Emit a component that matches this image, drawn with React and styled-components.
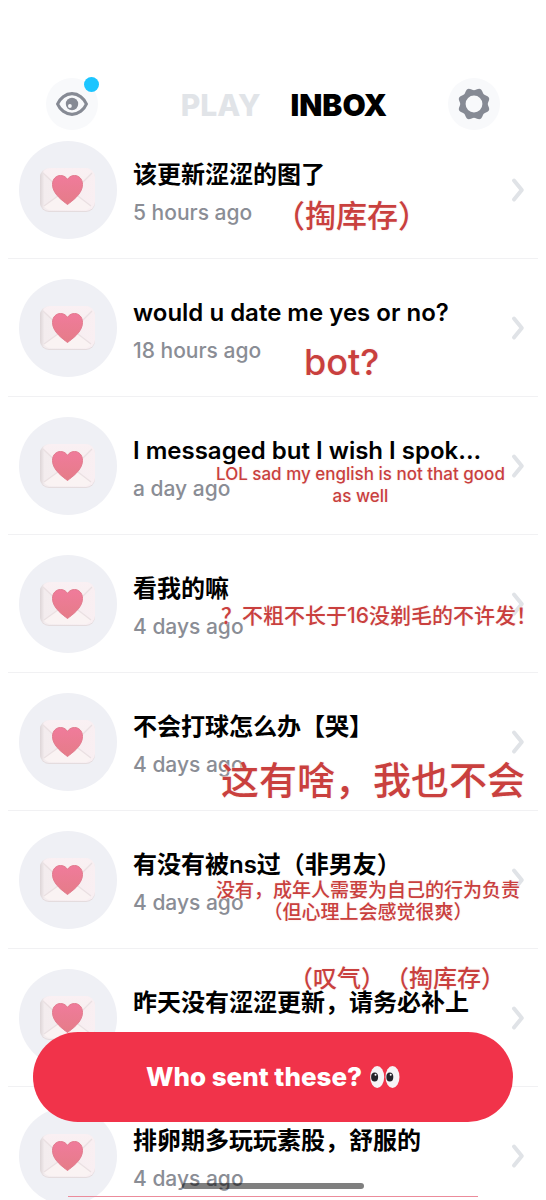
import React from 'react';
import styled, { createGlobalStyle } from 'styled-components';

const GlobalStyle = createGlobalStyle`
  * { box-sizing: border-box; }
  html, body { margin: 0; background: #fff; }
  body {
    font-family: Inter, "Noto Sans CJK SC", sans-serif;
    color: #000;
  }
`;

const Screen = styled.main`
  position: relative;
  height: 100vh;
  overflow: hidden;
  background: #fff;
`;

const Header = styled.header`
  display: flex;
  align-items: center;
  justify-content: space-between;
  padding: 78px 46px 11px;
`;

const IconButton = styled.button`
  position: relative;
  display: grid;
  place-items: center;
  width: 52px;
  height: 52px;
  padding: 0;
  border: 0;
  border-radius: 50%;
  background: #f8f9fb;
  color: #868a94;
`;

const Dot = styled.span`
  position: absolute;
  top: -1px;
  right: -1px;
  width: 15px;
  height: 15px;
  border-radius: 50%;
  background: #1cc5ff;
`;

const Tabs = styled.nav`
  display: flex;
  gap: 30px;
  padding: 2px 0 0 22px;
`;

const Tab = styled.a`
  font-size: 30px;
  line-height: 32px;
  font-weight: ${(p) => (p.$active ? 900 : 800)};
  text-decoration: none;
  color: ${(p) => (p.$active ? '#000' : '#e1e4e8')};
`;

const List = styled.ul`
  display: flex;
  flex-direction: column;
  gap: 20px;
  margin: 0;
  padding: 0 8px;
  list-style: none;
`;

const Row = styled.li`
  position: relative;
  padding: 0 13px 19px 11px;
  border-bottom: 1px solid #f1f1f3;
`;

const RowLink = styled.a`
  display: flex;
  align-items: center;
  gap: 16px;
  color: inherit;
  text-decoration: none;
`;

const Avatar = styled.span`
  display: grid;
  place-items: center;
  flex: none;
  width: 98px;
  height: 98px;
  border-radius: 50%;
  background: #eff0f5;
`;

const Texts = styled.span`
  display: flex;
  flex-direction: column;
  gap: 8px;
  flex: 1;
  min-width: 0;
  padding-top: 5px;
`;

const Title = styled.span`
  max-width: 350px;
  overflow: hidden;
  white-space: nowrap;
  font-size: 24px;
  line-height: 32px;
  font-weight: 600;
`;

const Time = styled.span`
  font-size: 21px;
  line-height: 28px;
  font-weight: 500;
  color: #8a8d95;
`;

const Note = styled.p`
  position: absolute;
  z-index: 1;
  top: ${(p) => p.$top}px;
  left: ${(p) => p.$left}px;
  margin: 0;
  white-space: pre;
  text-align: center;
  text-spacing-trim: space-all;
  font-size: ${(p) => p.$size}px;
  line-height: ${(p) => p.$line}px;
  font-weight: 500;
  color: #c9403e;
  text-shadow: 0 0 2px #fff, 0 0 2px #f3dcd8;
  pointer-events: none;
`;

const Cta = styled.button`
  position: absolute;
  z-index: 2;
  left: 33px;
  right: 33px;
  bottom: 78px;
  display: flex;
  align-items: center;
  justify-content: center;
  gap: 8px;
  height: 90px;
  border: 0;
  border-radius: 45px;
  background: #f1334a;
  color: #fff;
  font-family: inherit;
  font-size: 26px;
  line-height: 32px;
  font-weight: 800;
`;

const HomeBar = styled.div`
  position: absolute;
  z-index: 3;
  bottom: 11px;
  left: 50%;
  width: 182px;
  height: 6px;
  margin-left: -91px;
  border-radius: 3px;
  background: rgba(0, 0, 0, 0.5);
`;

const NextEdge = styled.div`
  position: absolute;
  z-index: 3;
  bottom: 3px;
  left: 68px;
  right: 68px;
  height: 1px;
  background: #ec8b9b;
`;

const EyeIcon = () => (
  <svg width="34" height="26" viewBox="0 0 34 26" fill="none" aria-hidden="true">
    <path d="M2.6 13C5 7.2 10.5 2.7 17 2.7S29 7.2 31.4 13C29 18.8 23.5 23.3 17 23.3S5 18.8 2.6 13Z" stroke="currentColor" strokeWidth="3.2" strokeLinejoin="round" />
    <circle cx="17" cy="13" r="6.2" fill="currentColor" />
    <circle cx="14.9" cy="15" r="1.9" fill="#f8f9fb" />
  </svg>
);

const gearPath = (() => {
  const points = [];
  for (let i = 0; i < 96; i += 1) {
    const a = (i / 96) * Math.PI * 2;
    const r = 15 + 1.2 * Math.cos(8 * (a - Math.PI / 8));
    points.push(`${(17 + r * Math.cos(a)).toFixed(2)} ${(17 + r * Math.sin(a)).toFixed(2)}`);
  }
  return `M${points.join('L')}ZM17 8.6a8.4 8.4 0 1 0 0 16.8a8.4 8.4 0 1 0 0-16.8Z`;
})();

const GearIcon = () => (
  <svg width="34" height="34" viewBox="0 0 34 34" aria-hidden="true">
    <path d={gearPath} fill="currentColor" fillRule="evenodd" />
  </svg>
);

const Chevron = () => (
  <svg width="14" height="26" viewBox="0 0 14 26" fill="none" aria-hidden="true">
    <path d="M3 3.5L10.8 13L3 22.5" stroke="#e0e3e7" strokeWidth="4" strokeLinecap="round" strokeLinejoin="round" />
  </svg>
);

const LoveLetter = () => (
  <svg width="58" height="46" viewBox="0 0 58 46" aria-hidden="true">
    <defs>
      <linearGradient id="paper" x1="0" y1="0" x2="1" y2="0">
        <stop offset="0" stopColor="#ddd5d7" />
        <stop offset="0.08" stopColor="#f3ecee" />
        <stop offset="1" stopColor="#f9eff2" />
      </linearGradient>
      <linearGradient id="fold" x1="0" y1="0" x2="0" y2="1">
        <stop offset="0" stopColor="#faf0f3" />
        <stop offset="1" stopColor="#f6efef" />
      </linearGradient>
      <linearGradient id="heart" x1="0" y1="0" x2="0" y2="1">
        <stop offset="0" stopColor="#f07b9b" />
        <stop offset="1" stopColor="#e57c88" />
      </linearGradient>
    </defs>
    <rect x="1" y="2" width="55" height="43" rx="9" fill="#e4dcde" />
    <rect x="1" y="1" width="55" height="43" rx="9" fill="url(#paper)" />
    <path d="M5 39L23 25Q29 21 35 25L52 39Q50 43 45 43H12Q7 43 5 39Z" fill="#faf3f3" />
    <path d="M4 5Q7 1 12 1H46Q51 1 53 5L34 24Q29 28 24 24Z" fill="url(#fold)" />
    <path d="M4 6L24 25M34 25L53 6M5 39L23 26M35 26L52 39" stroke="#eae0e2" strokeWidth="1.2" fill="none" />
    <path d="M28.5 37.5C24 34 13.5 27 13.5 17.5C13.5 11.5 17.5 8.5 21.5 8.5C25 8.5 27.5 10.5 28.5 12.5C29.5 10.5 32 8.5 35.5 8.5C39.5 8.5 43.5 11.5 43.5 17.5C43.5 27 33 34 28.5 37.5Z" fill="url(#heart)" stroke="#e27a8d" strokeWidth="1" strokeLinejoin="round" />
  </svg>
);

const EyesIcon = () => (
  <svg width="30" height="24" viewBox="0 0 30 24" role="img" aria-label="eyes">
    <ellipse cx="7.2" cy="12" rx="7" ry="11" fill="#f6f4f6" />
    <ellipse cx="22.5" cy="12" rx="7" ry="11" fill="#f6f4f6" />
    <ellipse cx="4.6" cy="12" rx="3.5" ry="4.6" fill="#24242a" />
    <ellipse cx="19.8" cy="12" rx="3.5" ry="4.6" fill="#24242a" />
    <circle cx="5.5" cy="9.8" r="1" fill="#fff" />
    <circle cx="20.7" cy="9.8" r="1" fill="#fff" />
  </svg>
);

const messages = [
  { title: '该更新涩涩的图了', time: '5 hours ago', note: { text: '（掏库存）', top: 55, left: 266, size: 31, line: 40 } },
  { title: 'would u date me yes or no?', time: '18 hours ago', note: { text: 'bot?', top: 63, left: 296, size: 36, line: 40 } },
  { title: 'I messaged but I wish I spok...', time: 'a day ago', note: { text: 'LOL sad my english is not that good\nas well', top: 46, left: 208, size: 17, line: 22 } },
  { title: '看我的嘛', time: '4 days ago', note: { text: '？不粗不长于16没剃毛的不许发！', top: 49, left: 213, size: 21, line: 24 } },
  { title: '不会打球怎么办【哭】', time: '4 days ago', note: { text: '这有啥，我也不会', top: 67, left: 213, size: 38, line: 40 } },
  { title: '有没有被ns过（非男友）', time: '4 days ago', note: { text: '没有，成年人需要为自己的行为负责\n（但心理上会感觉很爽）', top: 49, left: 208, size: 19, line: 22 } },
  { title: '昨天没有涩涩更新，请务必补上', time: '4 days ago', note: { text: '（叹气）（掏库存）', top: -6, left: 281, size: 24, line: 32 } },
  { title: '排卵期多玩玩素股，舒服的', time: '4 days ago' },
];

export default function App() {
  return (
    <Screen>
      <GlobalStyle />
      <Header>
        <IconButton aria-label="Views"><EyeIcon /><Dot /></IconButton>
        <Tabs>
          <Tab href="#play">PLAY</Tab>
          <Tab href="#inbox" $active aria-current="page">INBOX</Tab>
        </Tabs>
        <IconButton aria-label="Settings"><GearIcon /></IconButton>
      </Header>
      <List>
        {messages.map(({ title, time, note }) => (
          <Row key={title}>
            <RowLink href="#message">
              <Avatar><LoveLetter /></Avatar>
              <Texts>
                <Title>{title}</Title>
                <Time>{time}</Time>
              </Texts>
              <Chevron />
            </RowLink>
            {note && (
              <Note $top={note.top} $left={note.left} $size={note.size} $line={note.line}>{note.text}</Note>
            )}
          </Row>
        ))}
      </List>
      <Cta>Who sent these? <EyesIcon /></Cta>
      <HomeBar />
      <NextEdge />
    </Screen>
  );
}
